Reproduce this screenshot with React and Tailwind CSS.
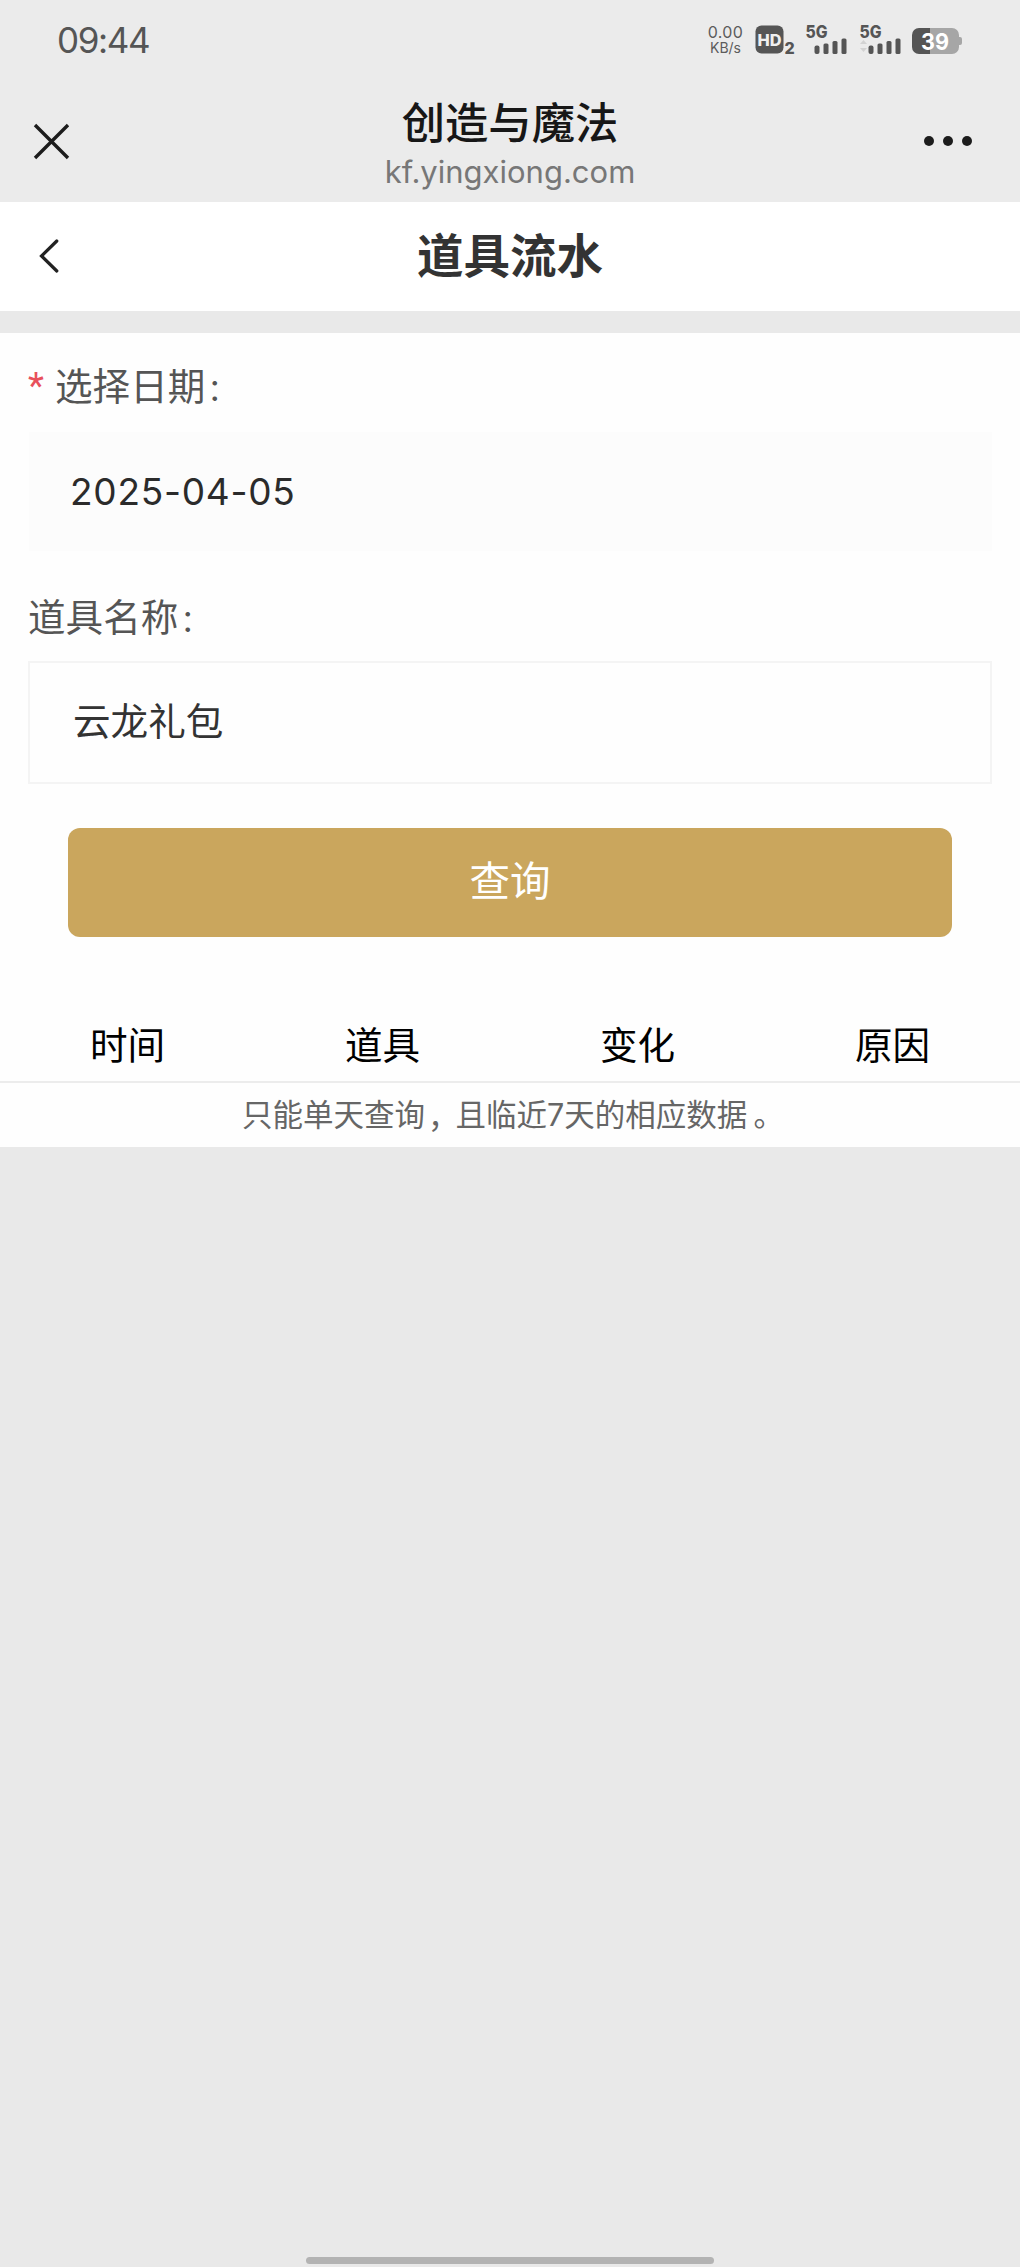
import React from 'react';

const columns = ['时间', '道具', '变化', '原因'];

function Signal({ updating }) {
  return (
    <svg className="-mt-[8px] block h-[40px] w-[46px]" viewBox="0 -8 46 40">
      <text x="0.5" y="13.500" fontFamily="Inter" fontWeight="800" fontSize="17" fill="#555" textLength="22" lengthAdjust="spacingAndGlyphs">5G</text>
      {updating && (
        <g fill="#d2d2d2">
          <path d="M1 20l3.500-4 3.500 4z" />
          <path d="M1 24l3.500 4 3.500-4z" />
        </g>
      )}
      <g fill="#555">
        <rect x="9.500" y="21.500" width="5" height="8.500" rx="2" />
        <rect x="18.500" y="19.500" width="5" height="10.500" rx="1.500" />
        <rect x="27.500" y="17" width="5" height="13" rx="1.500" />
        <rect x="36.500" y="14.500" width="5" height="15.500" rx="1.500" />
      </g>
    </svg>
  );
}

function StatusBar() {
  return (
    <div className="flex h-20 items-start justify-between pl-[57px] pr-[57px]">
      <div className="pt-[20px] text-[35px] leading-[40px] tracking-[-1.400px] text-[#555]">09:44</div>
      <div className="mt-[24px] flex h-[32px]">
        <div className="mr-[11px] flex w-[37px] flex-col items-center text-[#5c5c5c]">
          <span className="text-[16px] leading-[16px] tracking-[0.3px]">0.00</span>
          <span className="text-[14px] leading-[16px]">KB/s</span>
        </div>
        <svg className="mr-[9px] block h-[32px] w-[41px]" viewBox="0 0 41 32">
          <rect x="0.500" y="1.500" width="28" height="28" rx="6" fill="#555" />
          <text x="2.500" y="21.500" fontFamily="Inter" fontWeight="800" fontSize="16" fill="#efefef" textLength="24" lengthAdjust="spacingAndGlyphs">HD</text>
          <text x="29.500" y="29.500" fontFamily="Inter" fontWeight="800" fontSize="16" fill="#555">2</text>
        </svg>
        <div className="mr-[8px]"><Signal /></div>
        <div className="mr-[6px]"><Signal updating /></div>
        <svg className="block h-[32px] w-[52px]" viewBox="0 0 52 32">
          <path d="M8 4H19V30H8a7 7 0 0 1-7-7V11a7 7 0 0 1 7-7z" fill="#555" />
          <path d="M19 4H41a7 7 0 0 1 7 7V13h1q2 0 2 2v4q0 2-2 2h-1v2a7 7 0 0 1-7 7H19z" fill="#a6a6a6" />
          <text x="10" y="25.500" fontFamily="Inter" fontWeight="700" fontSize="23" fill="#fff" textLength="28" lengthAdjust="spacingAndGlyphs">39</text>
        </svg>
      </div>
    </div>
  );
}

function BrowserBar() {
  return (
    <div className="grid h-[122px] grid-cols-[120px_1fr_120px]">
      <button aria-label="关闭" className="flex items-start pl-[33px] pt-[43px]">
        <svg className="h-[37px] w-[37px]" viewBox="0 0 37 37" fill="none" stroke="#1c1c1c" strokeWidth="3.400">
          <path d="M2 2l33 33M35 2L2 35" />
        </svg>
      </button>
      <div className="flex flex-col items-center">
        <h1 className="mt-[18px] text-[43.300px] font-medium leading-[50px] text-[#171717]">创造与魔法</h1>
        <p className="mt-[6px] text-[31px] leading-[36px] text-[#777]">kf.yingxiong.com</p>
      </div>
      <button aria-label="更多" className="flex items-start justify-end gap-[9px] pr-[48px] pt-[56px]">
        <span className="size-[10px] rounded-full bg-[#1c1c1c]" />
        <span className="size-[10px] rounded-full bg-[#1c1c1c]" />
        <span className="size-[10px] rounded-full bg-[#1c1c1c]" />
      </button>
    </div>
  );
}

function PageHeader() {
  return (
    <header className="grid h-[109px] grid-cols-[100px_1fr_100px] bg-white">
      <button aria-label="返回" className="flex items-start pl-[38px] pt-[36px]">
        <svg className="h-[36px] w-[22px]" viewBox="0 0 22 36" fill="none" stroke="#222" strokeWidth="3.200" strokeLinecap="round">
          <path d="M18.800 3L3.500 18L18.800 33" />
        </svg>
      </button>
      <h2 className="mt-[24px] text-center text-[46.500px] font-bold leading-[60px] text-[#333]">道具流水</h2>
    </header>
  );
}

function Colon() {
  return <span className="ml-[2px] text-[30px]">：</span>;
}

export default function App() {
  return (
    <div className="flex h-[2267px] w-[1020px] flex-col overflow-hidden bg-[#e9e9e9] font-['Inter','Noto_Sans_CJK_SC',sans-serif]">
      <div className="bg-[#ebebeb]">
        <StatusBar />
        <BrowserBar />
      </div>
      <PageHeader />
      <main className="mt-[22px] h-[814px] bg-[#fefefe]">
        <section className="px-[28px] pt-[30px]">
          <div className="flex h-[50px] items-center text-[37.600px] leading-[50px] text-[#555]">
            <span className="mr-[8px] h-[50px] w-[19px] font-['Roboto'] text-[37px] leading-[46px] text-[#e8505b]">*</span>
            <span>选择日期<Colon /></span>
          </div>
          <div className="ml-px mt-[19px] flex h-[119px] items-center bg-[#fcfcfc] pl-[41px] text-[37px] tracking-[0.750px] text-[#2b2b2b]">
            2025-04-05
          </div>
          <div className="mt-[42px] h-[50px] text-[37.600px] leading-[50px] text-[#555]">道具名称<Colon /></div>
          <div className="mt-[18px] flex h-[123px] items-center border-2 border-[#f4f4f4] bg-[#fefefe] pl-[43px] text-[37.600px] text-[#333]">
            云龙礼包
          </div>
          <button className="mx-[40px] mt-[44px] flex h-[109px] w-[884px] items-center justify-center rounded-xl bg-[#caa65d] text-[40.500px] text-white">
            查询
          </button>
        </section>
        <div className="mt-[80px] grid h-[66px] grid-cols-4 border-b-2 border-[#ececec] pt-[4px] text-center text-[37.600px] leading-[50px] text-black">
          {columns.map((name) => (
            <div key={name}>{name}</div>
          ))}
        </div>
        <p className="mt-[12px] text-center text-[30.500px] leading-[40px] text-[#666]">
          只能单天查询<span className="inline-block translate-x-[3px] translate-y-[2px]">，</span>且临近7天的相应数据<span className="inline-block translate-x-[6px]">。</span>
        </p>
      </main>
      <div className="mx-auto mb-[3px] mt-auto h-[7px] w-[408px] rounded-full bg-[#b3b3b3]" />
    </div>
  );
}
